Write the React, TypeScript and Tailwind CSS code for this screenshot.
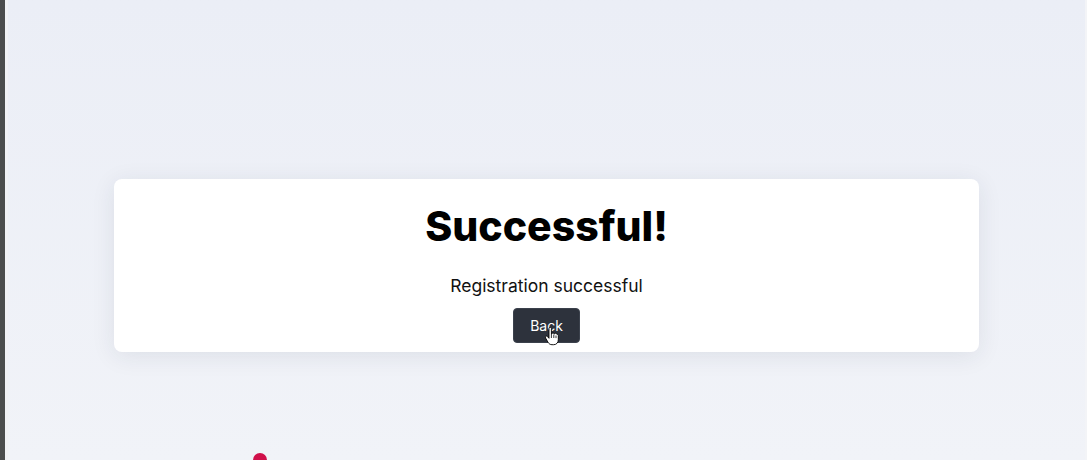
export default function App() {
  return (
    <div className="flex h-[460px] w-[1087px] overflow-hidden font-['Inter',sans-serif]">
      <div className="w-[5px] shrink-0 bg-[#4b4d4d]" />
      <div className="w-[3px] shrink-0 bg-[#f1f2f5]" />
      <main className="relative flex flex-1 flex-col bg-gradient-to-b from-[#ebeef6] to-[#f1f3f8] pl-[106px] pr-[108px] pt-[179px]">
        <div className="flex h-[173px] flex-col items-center rounded-lg bg-white pt-[20px] shadow-[0_4px_24px_rgba(30,40,70,0.09)]">
          <h1 className="text-[41px] font-extrabold leading-[54px] text-black">Successful!</h1>
          <p className="mt-[23px] text-[17.5px] leading-[20px] text-[#111]">Registration successful</p>
          <button className="relative mt-[12px] h-[35px] w-[67px] rounded-[4px] border border-[#3b414c] bg-[#2d323c] text-[14px] text-white">
            Back
            <svg
              className="absolute left-[31px] top-[18px]"
              width="14"
              height="19"
              viewBox="0 0 14 19"
            >
              <path
                d="M4 1.5c0-.8.6-1.3 1.2-1.3s1.2.5 1.2 1.3V7l.4-.2c.2-.6.7-.9 1.2-.9.6 0 1.1.4 1.2 1l.3-.1c.3-.4.7-.6 1.1-.6.6 0 1.1.4 1.2 1l.2-.1c.7 0 1.3.6 1.3 1.3v4.3c0 2.8-1.8 5-4.6 5H7c-1.8 0-3-.9-4-2.4L.6 11c-.4-.6-.3-1.3.2-1.7.5-.4 1.200-.3 1.6.2L4 11.3z"
                fill="white"
                stroke="black"
                strokeWidth="0.9"
              />
              <path d="M6.4 7v4M8.8 7.5v3.5M11 8.5v2.6" stroke="black" strokeWidth="0.8" />
            </svg>
          </button>
        </div>
        <div className="absolute bottom-[-7px] left-[245px] h-[14px] w-[14px] rounded-full bg-[#d0104a]" />
        <div className="absolute right-0 top-0 h-full w-[2px] bg-[#f3f4f7]" />
      </main>
    </div>
  );
}
